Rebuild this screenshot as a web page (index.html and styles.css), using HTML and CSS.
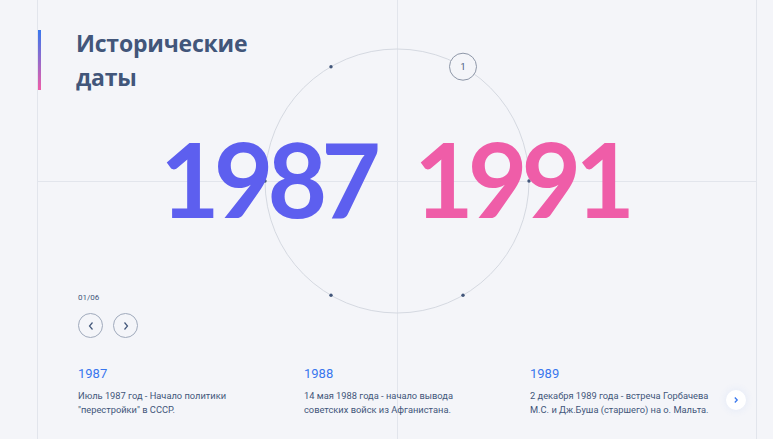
FILE: index.html
```html
<!DOCTYPE html>
<html lang="ru">
<head>
<meta charset="utf-8">
<title>Исторические даты</title>
<link rel="stylesheet" href="styles.css">
</head>
<body>
<main class="page">
  <svg class="orbit" width="300" height="300" viewBox="0 0 300 300" aria-hidden="true">
    <circle cx="150" cy="150" r="132" fill="none" stroke="#D5D9E1" stroke-width="1"/>
    <circle cx="84" cy="35.7" r="1.7" fill="#42567A"/>
    <circle cx="18" cy="150" r="1.7" fill="#42567A"/>
    <circle cx="282" cy="150" r="1.7" fill="#42567A"/>
    <circle cx="84" cy="264.3" r="1.7" fill="#42567A"/>
    <circle cx="216" cy="264.3" r="1.7" fill="#42567A"/>
    <circle cx="216" cy="35.7" r="13.5" fill="#F4F5F9" stroke="#8E97A8" stroke-width="1"/>
    <text x="216" y="39" text-anchor="middle" class="orbit-num">1</text>
  </svg>

  <header class="header">
    <span class="accent"></span>
    <h1 class="title">Исторические<br>даты</h1>
  </header>

  <div class="years">
    <span class="year year-from">1987</span>
    <span class="year year-to">1991</span>
  </div>

  <div class="counter">01/06</div>
  <div class="nav">
    <button class="nav-btn" aria-label="Назад">
      <svg width="8" height="10" viewBox="0 0 8 10"><path d="M5.5 1.5 L2.5 5 L5.5 8.5" fill="none" stroke="#42567A" stroke-width="1.2"/></svg>
    </button>
    <button class="nav-btn" aria-label="Вперёд">
      <svg width="8" height="10" viewBox="0 0 8 10"><path d="M2.5 1.5 L5.5 5 L2.5 8.5" fill="none" stroke="#42567A" stroke-width="1.2"/></svg>
    </button>
  </div>

  <section class="events">
    <article class="event">
      <h3 class="event-year">1987</h3>
      <p class="event-text">Июль 1987 год - Начало политики "перестройки" в СССР.</p>
    </article>
    <article class="event">
      <h3 class="event-year">1988</h3>
      <p class="event-text">14 мая 1988 года - начало вывода советских войск из Афганистана.</p>
    </article>
    <article class="event">
      <h3 class="event-year">1989</h3>
      <p class="event-text">2 декабря 1989 года - встреча Горбачева М.С. и Дж.Буша (старшего) на о. Мальта.</p>
    </article>
  </section>

  <button class="next" aria-label="Далее">
    <svg width="6" height="8" viewBox="0 0 6 8"><path d="M1.8 1.5 L4.2 4 L1.8 6.5" fill="none" stroke="#3877EE" stroke-width="1.3"/></svg>
  </button>
</main>
</body>
</html>
```

FILE: styles.css
```css
* { box-sizing: border-box; }

html, body {
  margin: 0;
  padding: 0;
  background: #F4F5F9;
}

body {
  font-family: "Roboto", "Open Sans", sans-serif;
  color: #42567A;
  overflow: hidden;
}

.page {
  position: relative;
  margin-left: 37px;
  width: 720px;
  height: 439px;
  border-left: 1px solid #E2E5EC;
  border-right: 1px solid #E2E5EC;
  background-image:
    linear-gradient(#E2E5EC, #E2E5EC),
    linear-gradient(#E2E5EC, #E2E5EC);
  background-size: 1px 100%, 100% 1px;
  background-position: 359px 0, 0 181px;
  background-repeat: no-repeat;
}

.orbit {
  position: absolute;
  left: 209px;
  top: 31px;
  pointer-events: none;
}

.orbit-num {
  font-family: "Roboto", sans-serif;
  font-size: 9px;
  fill: #42567A;
}

.header {
  display: flex;
  align-items: center;
  gap: 35px;
  padding-top: 26px;
}

.accent {
  width: 3px;
  height: 60px;
  background: linear-gradient(#3877EE, #EF5DA8);
}

.title {
  margin: 0;
  font-family: "Open Sans", sans-serif;
  font-weight: 700;
  font-size: 23px;
  line-height: 34px;
  color: #42567A;
  letter-spacing: -0.2px;
}

.years {
  position: relative;
  display: flex;
  justify-content: center;
  gap: 39px;
  margin-top: 33px;
  padding-right: 5px;
}

.year {
  font-family: "Lato", sans-serif;
  font-weight: 700;
  font-size: 103px;
  line-height: 103px;
  letter-spacing: -6px;
}

.year-from { color: #5D5FEF; }
.year-to { color: #EF5DA8; }

.counter {
  margin-top: 62px;
  padding-left: 40px;
  font-size: 8px;
  line-height: 12px;
  color: #42567A;
}

.nav {
  display: flex;
  gap: 10px;
  margin-top: 9px;
  padding-left: 40px;
}

.nav-btn {
  width: 25px;
  height: 25px;
  padding: 0;
  border: 1px solid #A0AABC;
  border-radius: 50%;
  background: transparent;
  display: flex;
  align-items: center;
  justify-content: center;
}

.events {
  display: grid;
  grid-template-columns: repeat(3, 226px);
  margin-top: 28px;
  padding-left: 40px;
}

.event-year {
  margin: 0;
  font-family: "Roboto", sans-serif;
  font-weight: 400;
  font-size: 13px;
  line-height: 16px;
  color: #3877EE;
}

.event-text {
  margin: 7px 0 0;
  width: 190px;
  font-size: 9.3px;
  line-height: 14px;
  color: #42567A;
}

.next {
  position: absolute;
  left: 688px;
  top: 390px;
  width: 20px;
  height: 20px;
  padding: 0;
  border: none;
  border-radius: 50%;
  background: #FFFFFF;
  box-shadow: 0 0 8px rgba(56, 119, 238, 0.1);
  display: flex;
  align-items: center;
  justify-content: center;
}
```
